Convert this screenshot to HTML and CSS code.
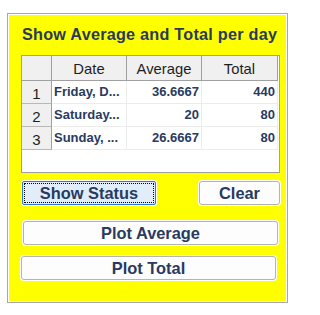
FILE: index.html
```html
<!DOCTYPE html>
<html>
<head>
<meta charset="utf-8">
<link rel="stylesheet" href="styles.css">
</head>
<body>
<div class="frame">
  <div class="panel">
    <div class="title">Show Average and Total per day</div>
    <div class="table">
      <div class="row head">
        <div class="hc"></div>
        <div class="hc">Date</div>
        <div class="hc">Average</div>
        <div class="hc">Total</div>
      </div>
      <div class="row">
        <div class="rn">1</div>
        <div class="dc txt">Friday, D...</div>
        <div class="dc num">36.6667</div>
        <div class="dc num">440</div>
      </div>
      <div class="row">
        <div class="rn">2</div>
        <div class="dc txt">Saturday...</div>
        <div class="dc num">20</div>
        <div class="dc num">80</div>
      </div>
      <div class="row">
        <div class="rn">3</div>
        <div class="dc txt">Sunday, ...</div>
        <div class="dc num">26.6667</div>
        <div class="dc num">80</div>
      </div>
    </div>
    <div class="actions">
      <button class="btn status">Show Status</button>
      <button class="btn clear">Clear</button>
    </div>
    <button class="btn wide avg">Plot Average</button>
    <button class="btn wide tot">Plot Total</button>
  </div>
</div>
</body>
</html>
```

FILE: styles.css
```css
body {
  margin: 0;
  background: #ffffff;
  font-family: "Liberation Sans", Arial, sans-serif;
}

.frame {
  margin: 13px 0 0 7px;
  width: 281px;
  height: 290px;
  box-sizing: border-box;
  border: 1px solid #a8a8a8;
  padding: 1px;
  background: #ffffff;
}

.panel {
  background: #ffff00;
  height: 100%;
  display: flex;
  flex-direction: column;
  align-items: flex-start;
}

.title {
  margin: 9px 0 0 13px;
  font-weight: bold;
  font-size: 16.2px;
  line-height: 20px;
  letter-spacing: 0.25px;
  color: #293a61;
  white-space: nowrap;
}

.table {
  margin: 11px 0 0 12px;
  width: 259px;
  height: 118px;
  box-sizing: border-box;
  border: 1px solid #a0a0a0;
  background: #ffffff;
}

.row {
  display: grid;
  grid-template-columns: 30px 75px 75px 76px;
  height: 23px;
}

.row.head {
  height: 25px;
}

.hc {
  box-sizing: border-box;
  background: #f0f0f0;
  border-right: 1px solid #a0a0a0;
  border-bottom: 1px solid #a0a0a0;
  font-size: 14.8px;
  color: #1e1e1e;
  text-align: center;
  padding-top: 4px;
  line-height: 18px;
}

.rn {
  box-sizing: border-box;
  background: #f0f0f0;
  border-right: 1px solid #a0a0a0;
  border-bottom: 1px solid #b8b8b8;
  font-size: 15px;
  color: #1e1e1e;
  text-align: center;
  padding-top: 4px;
  line-height: 18px;
}

.dc {
  box-sizing: border-box;
  border-right: 1px solid #ececec;
  border-bottom: 1px solid #ececec;
  font-size: 13px;
  font-weight: bold;
  color: #293a61;
  line-height: 22px;
  white-space: nowrap;
  overflow: hidden;
}

.dc.txt {
  padding-left: 2px;
}

.dc.num {
  text-align: right;
  padding-right: 2px;
}

.actions {
  display: flex;
  justify-content: space-between;
  margin: 8px 0 0 13px;
  width: 258px;
}

.btn {
  height: 24px;
  box-sizing: border-box;
  border: 1px solid #b4b4b4;
  border-radius: 3px;
  background: #fdfdfd;
  box-shadow: 0 0 0 1px #ffffff;
  font-family: "Liberation Sans", Arial, sans-serif;
  font-weight: bold;
  font-size: 16.4px;
  color: #293a61;
  padding: 0;
  line-height: 20px;
}

.btn.status {
  width: 134px;
  border-color: #2b7ad4;
  border-radius: 2px;
  background: #e1eefa;
  outline: 1px dotted #000000;
  outline-offset: -3px;
}

.btn.clear {
  width: 81px;
}

.btn.wide {
  width: 255px;
}

.btn.avg {
  margin: 16px 0 0 14px;
}

.btn.tot {
  margin: 11px 0 0 12px;
}
```
